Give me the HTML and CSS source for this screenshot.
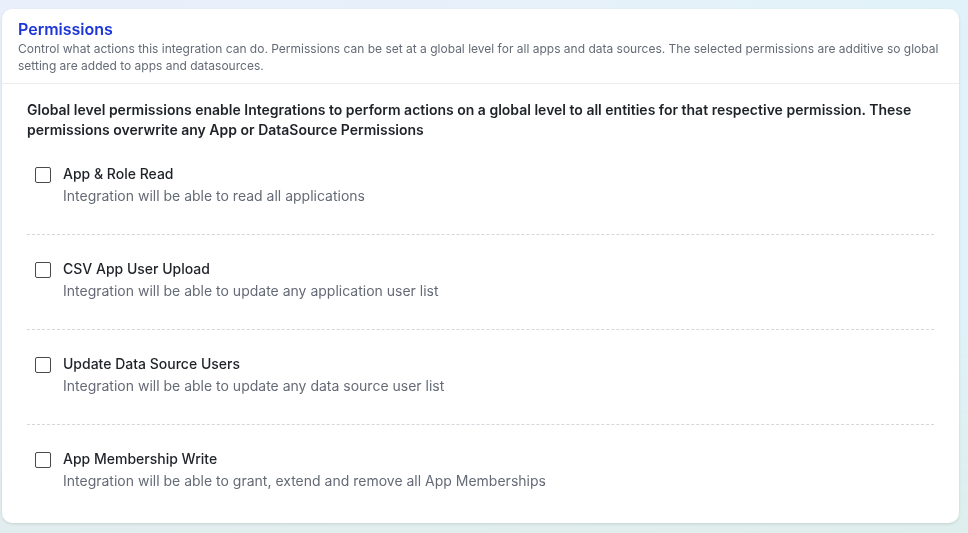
FILE: index.html
```html
<!DOCTYPE html>
<html lang="en">
<head>
<meta charset="utf-8">
<title>Permissions</title>
<link rel="stylesheet" href="styles.css">
</head>
<body>
<section class="card">
  <header class="card-header">
    <h2 class="title">Permissions</h2>
    <p class="subtitle">Control what actions this integration can do. Permissions can be set at a global level for all apps and data sources. The selected permissions are additive so global setting are added to apps and datasources.</p>
  </header>
  <div class="card-body">
    <p class="intro">Global level permissions enable Integrations to perform actions on a global level to all entities for that respective permission. These permissions overwrite any App or DataSource Permissions</p>
    <ul class="perm-list">
      <li class="perm">
        <span class="check"></span>
        <div class="perm-text">
          <div class="perm-name">App &amp; Role Read</div>
          <div class="perm-desc">Integration will be able to read all applications</div>
        </div>
      </li>
      <li class="perm">
        <span class="check"></span>
        <div class="perm-text">
          <div class="perm-name">CSV App User Upload</div>
          <div class="perm-desc">Integration will be able to update any application user list</div>
        </div>
      </li>
      <li class="perm">
        <span class="check"></span>
        <div class="perm-text">
          <div class="perm-name">Update Data Source Users</div>
          <div class="perm-desc">Integration will be able to update any data source user list</div>
        </div>
      </li>
      <li class="perm">
        <span class="check"></span>
        <div class="perm-text">
          <div class="perm-name">App Membership Write</div>
          <div class="perm-desc">Integration will be able to grant, extend and remove all App Memberships</div>
        </div>
      </li>
    </ul>
  </div>
</section>
</body>
</html>
```

FILE: styles.css
```css
* { box-sizing: border-box; }
html, body { height: 100%; }
body {
  margin: 0;
  padding: 9px 9px 10px 2px;
  font-family: Inter, "Noto Sans", Arial, sans-serif;
  background: linear-gradient(100deg, #e9effb 0%, #e7f1fa 50%, #dff3f8 100%);
  position: relative;
}
body::before {
  content: "";
  position: fixed;
  inset: 0;
  background: linear-gradient(180deg, rgba(255,255,255,0) 60%, rgba(222,236,232,0.7) 100%);
  z-index: -1;
}
.card {
  background: #fff;
  border-radius: 10px;
  height: 514px;
  box-shadow: 0 1px 3px rgba(0,0,0,0.12);
  overflow: hidden;
}
.card-header {
  padding: 9px 16px 9px 16px;
  border-bottom: 1px solid #ebedf0;
}
.title {
  margin: 0;
  font-size: 16px;
  line-height: 22px;
  font-weight: 600;
  color: #1d36d8;
}
.subtitle {
  margin: 0;
  font-size: 12px;
  line-height: 17px;
  color: #646b76;
}
.card-body {
  padding: 16px 25px 0 25px;
}
.intro {
  margin: 0;
  font-size: 14px;
  line-height: 20px;
  font-weight: 600;
  color: #1f2328;
}
.perm-list {
  list-style: none;
  margin: 0;
  padding: 0;
}
.perm {
  display: flex;
  align-items: flex-start;
  gap: 12px;
  padding: 24px 8px 28px 8px;
  border-bottom: 1px dashed #d4d7dc;
}
.perm:last-child { border-bottom: none; }
.check {
  flex: none;
  width: 16px;
  height: 16px;
  margin-top: 3px;
  border: 1.5px solid #4a4a4a;
  border-radius: 2px;
  background: #fff;
}
.perm-name {
  font-size: 14px;
  line-height: 20px;
  font-weight: 500;
  color: #1f2328;
}
.perm-desc {
  margin-top: 2px;
  font-size: 14px;
  line-height: 20px;
  color: #646b76;
}
```
